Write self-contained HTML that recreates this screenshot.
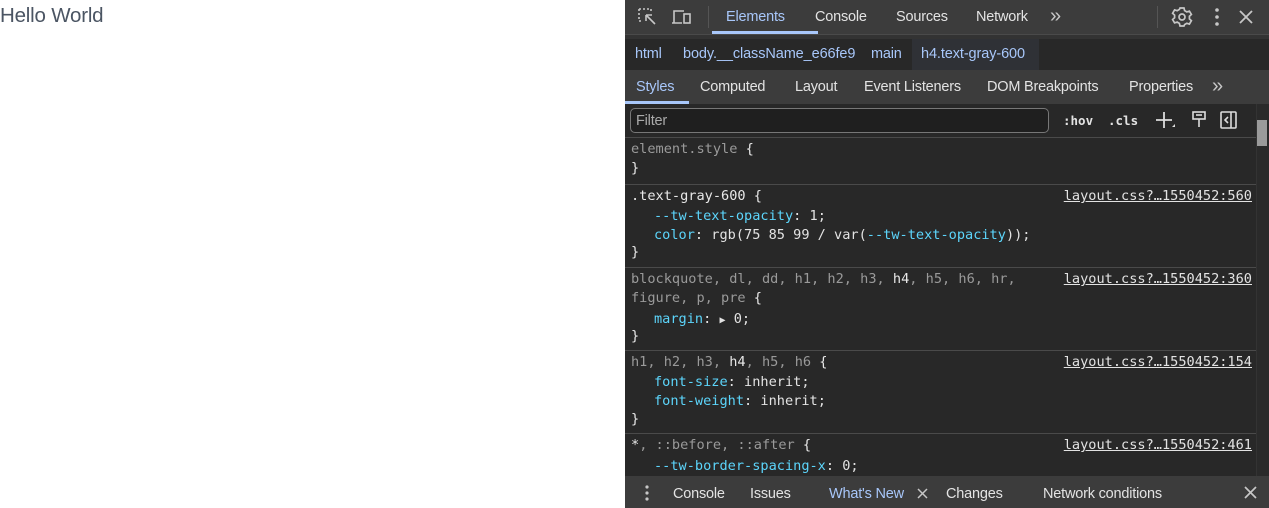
<!DOCTYPE html>
<html><head><style>
*{margin:0;padding:0;box-sizing:border-box}
body{width:1269px;height:508px;overflow:hidden;background:#fff;font-family:"Liberation Sans",sans-serif;position:relative}
.hw{position:absolute;left:0;top:4px;font-size:20.5px;color:#4b5563;letter-spacing:-0.2px}
.dt{position:absolute;left:625px;top:0;width:644px;height:508px;background:#282828;color:#e3e3e3;font-size:14.5px;letter-spacing:-0.2px}
.bar{position:absolute;left:0;width:644px}
.t{position:absolute;white-space:nowrap}
.mono{font-family:"DejaVu Sans Mono",monospace;font-size:12.5px;letter-spacing:0}
.rule{position:absolute;left:0;width:631px;border-top:1px solid #4a4a4a}
.l{position:absolute;white-space:pre;font-family:"DejaVu Sans Mono","Liberation Mono",monospace;font-size:13.6px;letter-spacing:0}
.g{color:#9a9a9a}.p{color:#5cd5fb}.w{color:#e8e8e8}
.lk{position:absolute;right:17px;text-decoration:underline;font-family:"DejaVu Sans Mono",monospace;font-size:13.6px;letter-spacing:0;color:#e3e3e3}
</style></head><body>
<div class="hw">Hello World</div>
<div class="dt">
 <div class="bar" style="top:0;height:34px;background:#3c3c3c"></div>
 <div class="bar" style="top:34px;height:5px;background:#333;border-top:1px solid #4a4a4a"></div>
 <svg class="t" style="left:12px;top:7px" width="22" height="20" viewBox="0 0 22 20" fill="none" stroke="#c7c7c7" stroke-width="1.6"><path d="M2 2h12M2 2v12M2 14h4M14 2v4" stroke-dasharray="2 2"/><path d="M9 8l9 9M9 8h6M9 8v6"/></svg>
 <svg class="t" style="left:46px;top:7px" width="22" height="20" viewBox="0 0 22 20" fill="none" stroke="#c7c7c7" stroke-width="1.6"><path d="M3 16V4h10M1 16h10"/><rect x="13" y="7" width="6" height="9"/></svg>
 <div class="t" style="left:83px;top:6px;width:1px;height:22px;background:#555"></div>
 <div class="t" style="left:101px;top:9px;color:#a8c7fa">Elements</div>
 <div class="t" style="left:87px;top:31px;width:106px;height:3px;background:#a8c7fa"></div>
 <div class="t" style="left:190px;top:9px">Console</div>
 <div class="t" style="left:271px;top:9px">Sources</div>
 <div class="t" style="left:351px;top:9px">Network</div>
 <div class="t" style="left:425px;top:5px;font-size:20px;color:#c7c7c7">»</div>
 <div class="t" style="left:532px;top:6px;width:1px;height:22px;background:#555"></div>
 <svg class="t" style="left:546px;top:6px" width="22" height="22" viewBox="0 0 22 22" fill="none" stroke="#c7c7c7" stroke-width="1.7"><path d="M9 2h4l.6 2.6 2.2 1.3 2.6-.8 2 3.4-2 1.8v2.6l2 1.8-2 3.4-2.6-.8-2.2 1.3L13 20H9l-.6-2.6-2.2-1.3-2.6.8-2-3.4 2-1.8V9.1l-2-1.8 2-3.4 2.6.8 2.2-1.3z"/><circle cx="11" cy="11" r="3"/></svg>
 <svg class="t" style="left:589px;top:7px" width="6" height="20" viewBox="0 0 6 20" fill="#c7c7c7"><circle cx="3" cy="3" r="1.8"/><circle cx="3" cy="10" r="1.8"/><circle cx="3" cy="17" r="1.8"/></svg>
 <svg class="t" style="left:614px;top:10px" width="14" height="14" viewBox="0 0 14 14" stroke="#c7c7c7" stroke-width="1.8"><path d="M1 1l12 12M13 1L1 13"/></svg>

 <div class="bar" style="top:39px;height:31px;background:#282828"></div>
 <div class="t" style="left:10px;top:46px;color:#a8c7fa">html</div>
 <div class="t" style="left:58px;top:46px;color:#a8c7fa;letter-spacing:-0.1px">body.__className_e66fe9</div>
 <div class="t" style="left:246px;top:46px;color:#a8c7fa">main</div>
 <div class="t" style="left:287px;top:39px;width:127px;height:31px;background:#2f3136"></div>
 <div class="t" style="left:296px;top:46px;color:#a8c7fa;letter-spacing:-0.1px">h4.text-gray-600</div>

 <div class="bar" style="top:70px;height:34px;background:#3c3c3c"></div>
 <div class="t" style="left:11px;top:79px;color:#a8c7fa">Styles</div>
 <div class="t" style="left:0;top:101px;width:64px;height:3px;background:#a8c7fa"></div>
 <div class="t" style="left:75px;top:79px">Computed</div>
 <div class="t" style="left:170px;top:79px">Layout</div>
 <div class="t" style="left:239px;top:79px;letter-spacing:-0.2px">Event Listeners</div>
 <div class="t" style="left:362px;top:79px;letter-spacing:-0.2px">DOM Breakpoints</div>
 <div class="t" style="left:504px;top:79px">Properties</div>
 <div class="t" style="left:587px;top:75px;font-size:20px;color:#c7c7c7">»</div>

 <div class="bar" style="top:104px;height:33px;background:#282828"></div>
 <div class="t" style="left:5px;top:108px;width:419px;height:25px;border:1px solid #777;border-radius:5px;background:#1f1f1f"></div>
 <div class="t" style="left:11px;top:113px;color:#aaa">Filter</div>
 <div class="t mono" style="left:438px;top:113px;font-weight:bold">:hov</div>
 <div class="t mono" style="left:483px;top:113px;font-weight:bold">.cls</div>
 <svg class="t" style="left:530px;top:110px" width="22" height="22" viewBox="0 0 22 22" stroke="#ddd" stroke-width="1.8"><path d="M9 2v16M1 10h16"/><path d="M17 17l3 0 0-3z" fill="#ddd" stroke="none"/></svg>
 <svg class="t" style="left:566px;top:110px" width="16" height="20" viewBox="0 0 16 20" fill="none" stroke="#ddd" stroke-width="1.6"><rect x="2" y="2" width="12" height="7"/><path d="M8 9v8"/><path d="M5 5h6"/></svg>
 <svg class="t" style="left:595px;top:110px" width="18" height="20" viewBox="0 0 18 20" fill="none" stroke="#ddd" stroke-width="1.6"><rect x="1" y="2" width="15" height="16" rx="1"/><path d="M11 2v16M8 7l-3 3 3 3"/></svg>

 <div class="t" style="left:631px;top:104px;width:13px;height:372px;background:#2a2a2a;border-left:1px solid #333"></div>
 <div class="t" style="left:632px;top:120px;width:10px;height:26px;background:#9a9a9a"></div>

 <div class="rule" style="top:137px"></div>
 <div class="l g" style="left:6px;top:141px">element.style <span class="w">{</span></div>
 <div class="l w" style="left:6px;top:160px">}</div>
 <div class="rule" style="top:184px"></div>
 <div class="l w" style="left:6px;top:188px">.text-gray-600 {</div>
 <div class="lk" style="top:188px">layout.css?…1550452:560</div>
 <div class="l" style="left:29px;top:208px"><span class="p">--tw-text-opacity</span>: 1;</div>
 <div class="l" style="left:29px;top:227px"><span class="p">color</span>: rgb(75 85 99 / var(<span class="p">--tw-text-opacity</span>));</div>
 <div class="l w" style="left:6px;top:244px">}</div>
 <div class="rule" style="top:267px"></div>
 <div class="l g" style="left:6px;top:271px">blockquote, dl, dd, h1, h2, h3, <span class="w">h4</span>, h5, h6, hr,</div>
 <div class="lk" style="top:271px">layout.css?…1550452:360</div>
 <div class="l g" style="left:6px;top:290px">figure, p, pre <span class="w">{</span></div>
 <div class="l" style="left:29px;top:311px"><span class="p">margin</span>: <span style="font-size:10px">▶</span> 0;</div>
 <div class="l w" style="left:6px;top:328px">}</div>
 <div class="rule" style="top:350px"></div>
 <div class="l g" style="left:6px;top:354px">h1, h2, h3, <span class="w">h4</span>, h5, h6 <span class="w">{</span></div>
 <div class="lk" style="top:354px">layout.css?…1550452:154</div>
 <div class="l" style="left:29px;top:374px"><span class="p">font-size</span>: inherit;</div>
 <div class="l" style="left:29px;top:393px"><span class="p">font-weight</span>: inherit;</div>
 <div class="l w" style="left:6px;top:411px">}</div>
 <div class="rule" style="top:433px"></div>
 <div class="l g" style="left:6px;top:437px"><span class="w">*</span>, ::before, ::after <span class="w">{</span></div>
 <div class="lk" style="top:437px">layout.css?…1550452:461</div>
 <div class="l" style="left:29px;top:458px"><span class="p">--tw-border-spacing-x</span>: 0;</div>

 <div class="bar" style="top:476px;height:32px;background:#3c3c3c"></div>
 <svg class="t" style="left:19px;top:485px" width="6" height="16" viewBox="0 0 6 16" fill="#c7c7c7"><circle cx="3" cy="2" r="1.6"/><circle cx="3" cy="8" r="1.6"/><circle cx="3" cy="14" r="1.6"/></svg>
 <div class="t" style="left:48px;top:486px">Console</div>
 <div class="t" style="left:125px;top:486px">Issues</div>
 <div class="t" style="left:204px;top:486px;color:#a8c7fa">What's New</div>
 <svg class="t" style="left:292px;top:488px" width="11" height="11" viewBox="0 0 11 11" stroke="#c7c7c7" stroke-width="1.5"><path d="M1 1l9 9M10 1L1 10"/></svg>
 <div class="t" style="left:321px;top:486px">Changes</div>
 <div class="t" style="left:418px;top:486px">Network conditions</div>
 <svg class="t" style="left:619px;top:486px" width="13" height="13" viewBox="0 0 13 13" stroke="#c7c7c7" stroke-width="1.7"><path d="M1 1l11 11M12 1L1 12"/></svg>
</div>
</body></html>
